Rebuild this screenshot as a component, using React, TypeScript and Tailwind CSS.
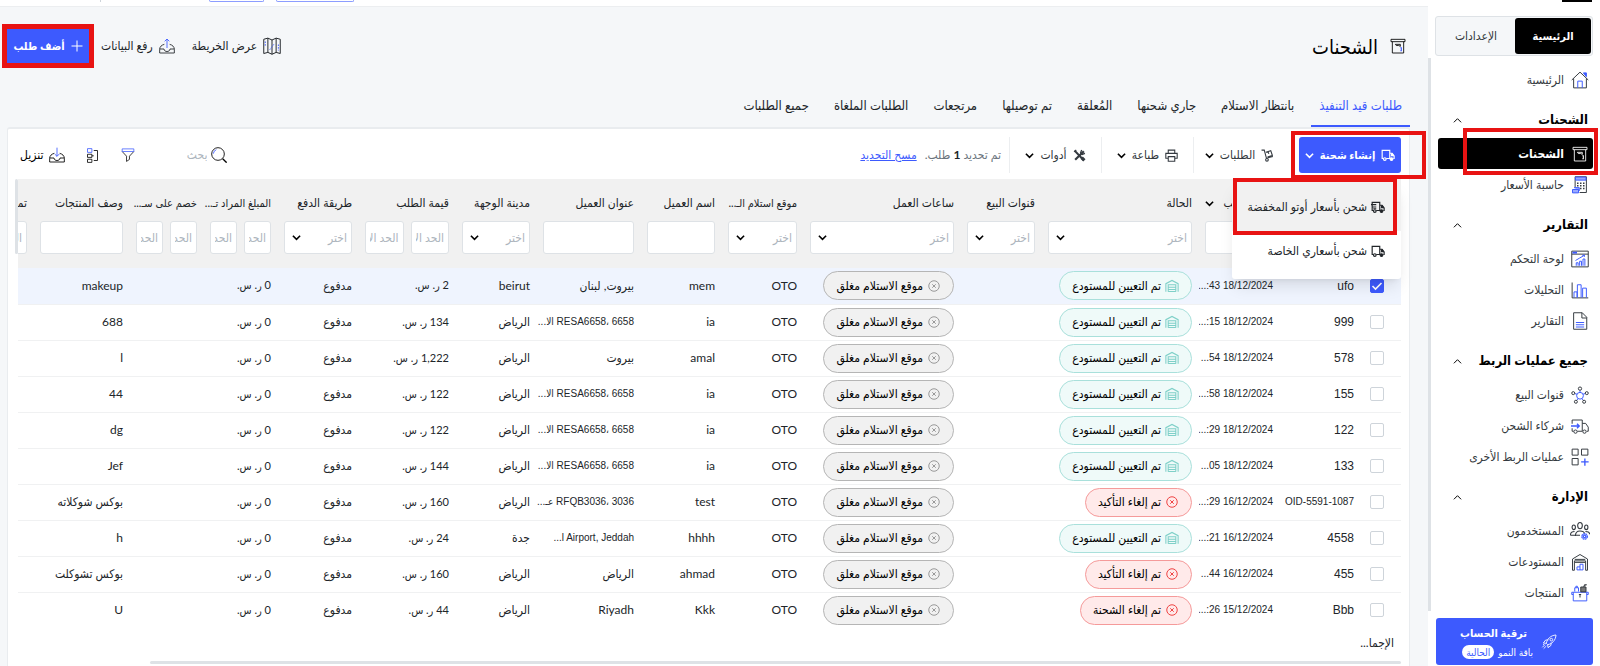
import React, { useState } from "react";

const BLUE = "#3d5afe";

type IconProps = { className?: string; children?: React.ReactNode };

const Svg: React.FC<IconProps> = ({ className = "size-[18px]", children }) => (
  <svg
    viewBox="0 0 24 24"
    fill="none"
    stroke="currentColor"
    strokeWidth="1.3"
    className={`shrink-0 ${className}`}
    aria-hidden="true"
  >
    {children}
  </svg>
);

const Chevron: React.FC<{ className?: string; thin?: boolean }> = ({ className = "", thin }) => (
  <svg
    viewBox="0 0 10 10"
    fill="none"
    stroke="currentColor"
    strokeWidth={thin ? 1.1 : 1.8}
    className={`size-[9px] shrink-0 ${className}`}
    aria-hidden="true"
  >
    <path d="M1 3l4 4 4-4" />
  </svg>
);

const HomeIcon = () => (
  <Svg>
    <path d="M1 12L12 1.500l11 10.500M3.500 10v12.500h17V10" />
    <path d="M9 22.500v-9h6v9" stroke={BLUE} />
    <path d="M16.500 2.500h4v5z" fill={BLUE} stroke={BLUE} />
  </Svg>
);

const BoxIcon: React.FC<IconProps & { accent?: string }> = ({ className, accent = BLUE }) => (
  <Svg className={className}>
    <path d="M1.500 2h21v3.500h-21zM3.500 5.500V22.500h17V5.500" />
    <path d="M8 9.500h7.500v3l-2.500-1.200H9.500z" />
    <path d="M15.500 14.500h1.500v4.500h-1.500" stroke={accent} strokeWidth="1.600" />
  </Svg>
);

const CalculatorIcon = () => (
  <Svg>
    <path d="M5.500 1h15v21h-9M5.500 1v14" />
    <path d="M6 1.500h14v4H6z" fill="#9aa9ff" stroke={BLUE} />
    <path d="M8 9.500h2M12 9.500h2M16 9.500h2M8 13h2M12 13h2M16 13h2M12 16.500h2M16 16.500h2" strokeWidth="2" />
    <path d="M2 18h8v4.500H2zM4 15.500h7V20" fill="#9aa9ff" stroke={BLUE} />
  </Svg>
);

const DashboardIcon = () => (
  <Svg>
    <path d="M1 1.500h22v21H1zM1 5.500h22" />
    <path d="M2 3.500h6" stroke={BLUE} strokeWidth="2.500" />
    <path d="M7 21v-4h2.500v4M11.500 21v-6H14v6M16 21v-9h2.500v9M6 14l5-3 7-4M15 7h3v2" stroke={BLUE} />
  </Svg>
);

const AnalyticsIcon = () => (
  <Svg>
    <path d="M1.500 2v20.500H23" />
    <path d="M4 22v-7.500h4V22M8.500 22V5h5v17M15.500 22V9.500h5V22" stroke={BLUE} />
  </Svg>
);

const DocIcon = () => (
  <Svg>
    <path d="M3.500 1H15l6 6v16h-17.500zM14.500 1v7H21" />
    <path d="M6.500 14h11M6.500 17h11M6.500 20h11" stroke={BLUE} />
  </Svg>
);

const NetworkIcon = () => (
  <Svg>
    <circle cx="12" cy="13" r="4.500" stroke={BLUE} />
    <path d="M12 8.500V6M8 11l-3-1M16 11l3-1M9.500 17L7.500 19M14.500 17l2 2" stroke={BLUE} />
    <circle cx="12" cy="3.500" r="2.200" />
    <circle cx="3" cy="9.500" r="2" />
    <circle cx="21" cy="9.500" r="2" />
    <circle cx="6.500" cy="21" r="2" />
    <circle cx="17.500" cy="21" r="2" />
  </Svg>
);

const PartnerTruckIcon = () => (
  <Svg>
    <path d="M1.500 9V4H15v15H8.500M1.500 15v4h2M15 8.500h4.500l3.500 5V19h-2" />
    <path d="M0 12h11M8 9l3 3-3 3" stroke={BLUE} strokeWidth="1.800" />
    <circle cx="6" cy="19.500" r="2.200" />
    <circle cx="18" cy="19.500" r="2.200" />
  </Svg>
);

const GridPlusIcon = () => (
  <Svg>
    <path d="M1.500 1.500h8v8h-8zM14 1.500h8.500v8H14zM1.500 14h8v8.500h-8z" />
    <path d="M18.500 14v9.500M13.500 18.500h10" stroke={BLUE} strokeWidth="1.800" />
  </Svg>
);

const UsersIcon = () => (
  <Svg className="size-5">
    <ellipse cx="12" cy="5.500" rx="2.800" ry="3.800" />
    <ellipse cx="4.500" cy="7.500" rx="2" ry="2.800" />
    <ellipse cx="19.500" cy="7.500" rx="2" ry="2.800" />
    <path d="M6.500 18c0-4 2-6 5.500-6s5 1 5.500 3M.5 17c0-3 1.500-4.500 5-4.500M23.500 16c0-2.500-1.500-3.500-5-3.500M.5 17H12" />
    <circle cx="17.500" cy="18.500" r="3.400" fill="#9aa9ff" stroke={BLUE} strokeDasharray="2 .8" />
    <circle cx="17.500" cy="18.500" r="1.400" fill="white" stroke={BLUE} />
  </Svg>
);

const WarehouseIcon = () => (
  <Svg>
    <path d="M2 23V8l10-6 10 6v15h-2.500V10.500h-15V23zM5 8.500h14M5 12.500h14" />
    <path d="M8 22.500v-4h4v-3.500h4v7.500zM12 18.500v4" stroke={BLUE} />
  </Svg>
);

const ProductsIcon = () => (
  <Svg>
    <path d="M1 11h22M3 11v11.500h18V11M1 11v3h2M23 11v3h-2M5 10V5h5v5M6.500 5V3h2v2" stroke={BLUE} />
    <path d="M13 4h7v6.500h-7zM17 4l1-3h3" fill="#777" />
    <path d="M12 14v4M10.500 14h3" />
  </Svg>
);

const RocketIcon = () => (
  <Svg className="size-4">
    <path d="M8 14c1-6 6-12 14.500-12.500C22 10 16 15 10 16zM8 14l-4.500-.5L7 9h4M10 16l.5 4.500L15 17v-4" />
    <circle cx="15.500" cy="8.500" r="2" />
    <path d="M6 16l-4 4M8 18l-4 4M5 15l-2 1" />
  </Svg>
);

const MapIcon = () => (
  <Svg>
    <path d="M1 3l5.500-1.500L12 4l5.500-2.500L23 3v19l-5.500-1.500L12 23l-5.500-2.500L1 22zM6.500 1.500v19M12 4v19M17.500 1.500v19" />
    <path d="M3 6v6M9 17l3-4 3-4M20.500 10v8" stroke={BLUE} strokeDasharray="2 1.500" />
  </Svg>
);

const TrayIcon: React.FC<{ down?: boolean }> = ({ down }) => (
  <Svg className="size-4">
    <path d="M8 9.500C4 10.500 1 13 1 17v5.500h22V17c0-4-3-6.500-7-7.500M1 16.500h6.500c0 5 9 5 9 0H23" />
    <path d={down ? "M12 1v13M8.500 10.500L12 14l3.500-3.500" : "M12 15V1.500M8.500 5L12 1.500 15.500 5"} stroke={BLUE} />
  </Svg>
);

const FunnelIcon = () => (
  <Svg className="size-[14px]">
    <path d="M2 6l7.500 8v9l5-3.500V14L22 6" />
    <path d="M2 1.500h20V6H2z" stroke={BLUE} />
  </Svg>
);

const ColumnsIcon = () => (
  <Svg className="size-[15px]">
    <path d="M4 10h7v5H4zM4 18h7v5H4zM14 4h6v16h-6M14 12.500h-3" />
    <path d="M4 1h7v6H4z" stroke={BLUE} />
  </Svg>
);

const SearchIcon = () => (
  <Svg className="size-4">
    <circle cx="10.500" cy="10.500" r="9.500" />
    <path d="M17.500 17.500l6 6" strokeWidth="2" />
    <path d="M3.500 10A7 7 0 018 4" stroke={BLUE} />
  </Svg>
);

const TruckIcon: React.FC<{ lines?: boolean; className?: string }> = ({ lines, className = "size-[14px]" }) => (
  <svg viewBox="0 0 24 24" fill="none" stroke="currentColor" strokeWidth="2" className={`shrink-0 ${className}`} aria-hidden="true">
    <path d="M4 18H2V4h13v14H9M15 9h4l3.500 4.500V18H21" />
    <path d="M17 9h3l3 5h-6z" fill="currentColor" stroke="none" />
    {lines && <path d="M0 8h9M2 12h7M4 15h5" />}
    <circle cx="6.500" cy="19" r="2.300" />
    <circle cx="18" cy="19" r="2.300" fill="currentColor" />
  </svg>
);

const CartIcon = () => (
  <Svg className="size-[13px]">
    <path d="M1 2h5l4 15 12-3M9 6l9-3 3 9-9 3M13 5l1.500 4" strokeWidth="2" />
    <circle cx="11" cy="20" r="2.500" strokeWidth="2" />
  </Svg>
);

const PrinterIcon = () => (
  <Svg className="size-[13px]">
    <path d="M6 8V2h12v6M5 17H1.500V8h21v9H19M6 14h12v8.500H6z" strokeWidth="2" />
  </Svg>
);

const ToolsIcon = () => (
  <Svg className="size-[13px]">
    <path d="M3 3l17 18M20 4L4 20" strokeWidth="4" />
    <path d="M16 2l-2 5 3 3 5-2M2 5l4-3" strokeWidth="2.400" />
    <path d="M16 16l5 5" strokeWidth="6" />
  </Svg>
);

const DepotIcon = () => (
  <Svg className="size-[14px] text-[#7fd0c8]">
    <path d="M1.500 22V8L12 2.500 22.500 8v14M5.500 22V10h13v12M5.500 14h13M5.500 18h13M5.500 21.500h13" strokeWidth="1.800" />
  </Svg>
);

const CrossCircle = () => (
  <Svg className="size-3">
    <circle cx="12" cy="12" r="10.500" strokeWidth="2" />
    <path d="M8.500 8.500l7 7M15.500 8.500l-7 7" strokeWidth="2" />
  </Svg>
);

type NavItem = { label: string; icon: React.ReactNode; active?: boolean };

const SECTIONS: { title: string; items: NavItem[] }[] = [
  {
    title: "الشحنات",
    items: [
      { label: "الشحنات", icon: <BoxIcon className="size-4" accent="currentColor" />, active: true },
      { label: "حاسبة الأسعار", icon: <CalculatorIcon /> },
    ],
  },
  {
    title: "التقارير",
    items: [
      { label: "لوحة التحكم", icon: <DashboardIcon /> },
      { label: "التحليلات", icon: <AnalyticsIcon /> },
      { label: "التقارير", icon: <DocIcon /> },
    ],
  },
  {
    title: "جميع عمليات الربط",
    items: [
      { label: "قنوات البيع", icon: <NetworkIcon /> },
      { label: "شركاء الشحن", icon: <PartnerTruckIcon /> },
      { label: "عمليات الربط الأخرى", icon: <GridPlusIcon /> },
    ],
  },
  {
    title: "الإدارة",
    items: [
      { label: "المستخدمون", icon: <UsersIcon /> },
      { label: "المستودعات", icon: <WarehouseIcon /> },
      { label: "المنتجات", icon: <ProductsIcon /> },
    ],
  },
];

const TABS = [
  "طلبات قيد التنفيذ",
  "بانتظار الاستلام",
  "جاري شحنها",
  "المُعلقة",
  "تم توصيلها",
  "مرتجعات",
  "الطلبات الملغاة",
  "جميع الطلبات",
];

type Status = "assigned" | "unconfirmed" | "cancelled";

type Row = {
  id: string;
  date: string;
  status: Status;
  customer: string;
  address: string;
  city: string;
  value: string;
  description: string;
};

const ROWS: Row[] = [
  { id: "ufo", date: "18/12/2024 43:...", status: "assigned", customer: "mem", address: "بيروت, لبنان", city: "beirut", value: "2", description: "makeup" },
  { id: "999", date: "18/12/2024 15:...", status: "assigned", customer: "ia", address: "RESA6658، 6658 الا...", city: "الرياض", value: "134", description: "688" },
  { id: "578", date: "18/12/2024 54...", status: "assigned", customer: "amal", address: "بيروت", city: "الرياض", value: "1,222", description: "l" },
  { id: "155", date: "18/12/2024 58:...", status: "assigned", customer: "ia", address: "RESA6658، 6658 الا...", city: "الرياض", value: "122", description: "44" },
  { id: "122", date: "18/12/2024 29:...", status: "assigned", customer: "ia", address: "RESA6658، 6658 الا...", city: "الرياض", value: "122", description: "dg" },
  { id: "133", date: "18/12/2024 05...", status: "assigned", customer: "ia", address: "RESA6658، 6658 الا...", city: "الرياض", value: "144", description: "Jef" },
  { id: "OID-5591-1087", date: "16/12/2024 29:...", status: "unconfirmed", customer: "test", address: "RFQB3036، 3036 عـ...", city: "الرياض", value: "160", description: "بوكس شوكلاته" },
  { id: "4558", date: "16/12/2024 21:...", status: "assigned", customer: "hhhh", address: "l Airport, Jeddah...", city: "جدة", value: "24", description: "h" },
  { id: "455", date: "16/12/2024 44...", status: "unconfirmed", customer: "ahmad", address: "الرياض", city: "الرياض", value: "160", description: "بوكس تشوكلت" },
  { id: "Bbb", date: "15/12/2024 26:...", status: "cancelled", customer: "Kkk", address: "Riyadh", city: "الرياض", value: "44", description: "U" },
];

const STATUS_LABEL: Record<Status, string> = {
  assigned: "تم التعيين للمستودع",
  unconfirmed: "تم إلغاء التأكيد",
  cancelled: "تم إلغاء الشحنة",
};

const pillBase = "inline-flex h-[29px] items-center gap-1 rounded-full border px-3 align-middle whitespace-nowrap text-black";

const StatusPill: React.FC<{ status: Status }> = ({ status }) =>
  status === "assigned" ? (
    <span className={`${pillBase} border-[#a9e0db] bg-[#effaf9]`}>
      <DepotIcon />
      {STATUS_LABEL[status]}
    </span>
  ) : (
    <span className={`${pillBase} border-[#f59a9a] bg-[#ffeaea]`}>
      <span className="flex px-px text-[#ef4444]">
        <CrossCircle />
      </span>
      {STATUS_LABEL[status]}
    </span>
  );

const fieldBase = "h-[33px] w-full min-w-0 rounded-[3px] border border-[#dee2e6] bg-white px-1 text-xs text-[#adb5bd] placeholder-[#adb5bd] outline-none";

const TextFilter: React.FC<{ label: string; placeholder?: string }> = ({ label, placeholder }) => (
  <input type="text" aria-label={label} placeholder={placeholder} className={fieldBase} />
);

const SelectFilter: React.FC<{ label: string }> = ({ label }) => (
  <div className="relative">
    <select aria-label={label} className={`${fieldBase} appearance-none`}>
      <option>اختر</option>
    </select>
    <Chevron className="pointer-events-none absolute top-3 left-2 text-black" />
  </div>
);

const RangeFilter: React.FC<{ label: string; from?: string; to?: string }> = ({ label, from = "الحد", to = "الحد" }) => (
  <div className="flex gap-[7px]">
    <TextFilter label={`${label} من`} placeholder={from} />
    <TextFilter label={`${label} إلى`} placeholder={to} />
  </div>
);

const COLUMNS: { title: string; width: string; filter: React.ReactNode; small?: boolean }[] = [
  { title: "رقم الطلب", width: "w-[81px]", filter: <TextFilter label="رقم الطلب" /> },
  { title: "تاريخ الطلب", width: "w-[81px]", filter: <TextFilter label="تاريخ الطلب" />, small: true },
  { title: "الحالة", width: "w-[157px]", filter: <SelectFilter label="الحالة" /> },
  { title: "قنوات البيع", width: "w-[81px]", filter: <SelectFilter label="قنوات البيع" /> },
  { title: "ساعات العمل", width: "w-[157px]", filter: <SelectFilter label="ساعات العمل" /> },
  { title: "موقع استلام الـ...", width: "w-[82px]", filter: <SelectFilter label="موقع استلام" />, small: true },
  { title: "اسم العميل", width: "w-[81px]", filter: <TextFilter label="اسم العميل" /> },
  { title: "عنوان العميل", width: "w-[104px]", filter: <TextFilter label="عنوان العميل" /> },
  { title: "مدينة الوجهة", width: "w-[81px]", filter: <SelectFilter label="مدينة الوجهة" /> },
  { title: "قيمة الطلب", width: "w-[97px]", filter: <RangeFilter label="قيمة الطلب" from="الحد الأدنى" to="الحد الأقصى" /> },
  { title: "طريقة الدفع", width: "w-[81px]", filter: <SelectFilter label="طريقة الدفع" /> },
  { title: "المبلغ المراد تـ...", width: "w-[74px]", filter: <RangeFilter label="المبلغ المراد تحصيله" />, small: true },
  { title: "خصم على سـ...", width: "w-[74px]", filter: <RangeFilter label="خصم" />, small: true },
  { title: "وصف المنتجات", width: "w-[96px]", filter: <TextFilter label="وصف المنتجات" /> },
  { title: "تمت الطباعة", width: "w-[81px]", filter: <TextFilter label="تمت الطباعة" placeholder="الحد" /> },
];

const cell = "overflow-hidden pr-[7px] whitespace-nowrap";
const codeCell = `${cell} font-['Liberation_Sans','DejaVu_Sans_Condensed',sans-serif] text-[10px]`;

const Sidebar = () => (
  <aside className="flex w-[172px] shrink-0 flex-col bg-white">
    <div className="mr-2 h-0.5 w-[30px] shrink-0 self-start bg-black" />
    <div className="mt-3.5 mr-[7px] ml-[7px] flex h-10 shrink-0 rounded-[3px] border border-[#dee2e6] bg-[#f5f7f9] p-px">
      <button className="w-[76px] rounded-[3px] bg-black text-[11px] font-bold text-white">الرئيسية</button>
      <button className="flex-1 text-xs text-[#343a40]">الإعدادات</button>
    </div>
    <div className="flex min-h-0 flex-1">
      <nav className="min-w-0 flex-1 pt-2 text-xs text-[#343a40]">
        <a href="#home" className="mr-2 flex h-[31px] items-center gap-1.5 pr-0.5">
          <span className="flex w-5 justify-center">
            <HomeIcon />
          </span>
          الرئيسية
        </a>
        {SECTIONS.map((section) => (
          <div key={section.title} className="mt-[7px]">
            <button className="flex h-9 w-full items-center justify-between pr-3 pl-[22px] text-[13px] font-bold text-black">
              {section.title}
              <Chevron thin className="rotate-180" />
            </button>
            {section.items.map((item) => (
              <a
                key={item.label}
                href="#item"
                className={
                  item.active
                    ? "relative mr-[7px] ml-[7px] flex h-[31px] items-center gap-1.5 rounded-[3px] bg-black pr-[3px] font-bold text-white"
                    : "mr-2 flex h-[31px] items-center gap-1.5 pr-0.5"
                }
              >
                <span className="flex w-5 shrink-0 justify-center">{item.icon}</span>
                {item.label}
                {item.active && <span className="absolute -top-2.5 -right-[5px] -bottom-1.5 left-[25px] border-4 border-[#e81313]" />}
              </a>
            ))}
          </div>
        ))}
      </nav>
      <div className="mt-0.5 mb-[7px] w-[3px] shrink-0 bg-[#dee2e6]" />
    </div>
    <a href="#upgrade" className="mr-[7px] mb-px ml-2 flex h-[47px] shrink-0 items-center gap-2 rounded-[3px] bg-[#3d5afe] pr-9 text-white">
      <RocketIcon />
      <span className="flex flex-col gap-1 whitespace-nowrap">
        <span className="pr-1.5 text-[11px] leading-4 font-bold">ترقية الحساب</span>
        <span className="flex items-center gap-1 text-[10px] leading-[14px]">
          باقة النمو
          <span className="rounded-full bg-white px-1 text-[#3d5afe]">الحالية</span>
        </span>
      </span>
    </a>
  </aside>
);

const PageHeader = () => (
  <header className="flex h-[78px] shrink-0 items-center justify-between pr-1">
    <h1 className="flex items-center gap-3 text-xl text-black">
      <BoxIcon className="size-4" />
      الشحنات
    </h1>
    <div className="flex items-center text-xs text-[#212529]">
      <button className="flex items-center gap-1.5">
        <MapIcon />
        عرض الخريطة
      </button>
      <button className="mr-[17px] flex items-center gap-1.5">
        <TrayIcon />
        رفع البيانات
      </button>
      <div className="relative mr-3">
        <button className="flex h-[34px] w-[82px] items-center justify-center gap-1.5 bg-[#3d5afe] text-[11px] font-bold text-white">
          <Svg className="size-3">
            <path d="M12 1v22M1 12h22" strokeWidth="2" />
          </Svg>
          أضف طلب
        </button>
        <span className="pointer-events-none absolute -inset-[5px] border-[5px] border-[#e81313]" />
      </div>
    </div>
  </header>
);

const toolButton = "flex w-full items-center justify-center gap-1.5 text-xs text-[#343a40]";
const toolGroup = "flex h-9 w-[92px] items-center border-l border-[#eceef0]";

const Toolbar = () => (
  <div className="flex h-[50px] shrink-0 items-center pt-0.5 pr-2 pl-3">
    <div className="relative">
      <button className="flex h-9 w-[102px] items-center justify-center gap-1.5 rounded-[3px] bg-[#3d5afe] text-[11px] font-bold text-white">
        <TruckIcon />
        إنشاء شحنة
        <Chevron />
      </button>
      <span className="pointer-events-none absolute -top-1.5 -right-[25px] -bottom-1.5 -left-2 z-10 border-4 border-[#e81313]" />

      {/* Shipping menu */}
      <ul role="menu" className="absolute top-[45px] right-0 z-20 h-[97px] w-[169px] rounded-b-[3px] bg-white text-xs whitespace-nowrap text-[#212529] shadow-lg">
        <li role="none" className="relative h-[49px] bg-[#f1f1f1] pr-4">
          <button role="menuitem" className="flex h-[49px] items-center gap-1">
            <TruckIcon lines />
            شحن بأسعار أوتو المخفضة
          </button>
          <span className="pointer-events-none absolute -top-1 right-1 -bottom-1 left-px border-4 border-[#e81313]" />
        </li>
        <li role="none" className="pr-4">
          <button role="menuitem" className="flex h-10 items-center gap-1">
            <TruckIcon />
            شحن بأسعاري الخاصة
          </button>
        </li>
      </ul>
    </div>
    <div className={`mr-[14px] ${toolGroup}`}>
      <button className={toolButton}>
        <CartIcon />
        الطلبات
        <Chevron className="text-black" />
      </button>
    </div>
    <div className={toolGroup}>
      <button className={toolButton}>
        <PrinterIcon />
        طباعة
        <Chevron className="text-black" />
      </button>
    </div>
    <div className={toolGroup}>
      <button className={toolButton}>
        <ToolsIcon />
        أدوات
        <Chevron className="text-black" />
      </button>
    </div>
    <p className="mr-2 text-xs text-[#6c757d]">
      تم تحديد <b className="text-[#212529]">1</b> طلب.
    </p>
    <a href="#clear" className="mr-2 text-xs text-[#3d5afe] underline">
      مسح التحديد
    </a>
    <label className="mr-auto flex items-center gap-1">
      <SearchIcon />
      <input type="search" aria-label="بحث" placeholder="بحث" className="w-16 text-xs placeholder-[#adb5bd] outline-none" />
    </label>
    <button aria-label="تصفية" className="mr-2">
      <FunnelIcon />
    </button>
    <button aria-label="الأعمدة" className="mr-[21px]">
      <ColumnsIcon />
    </button>
    <button className="mr-5 flex items-center gap-1.5 text-xs text-black">
      <TrayIcon down />
      تنزيل
    </button>
  </div>
);

const OrdersTable = () => {
  const [selected, setSelected] = useState<string[]>(["ufo"]);

  const toggle = (id: string) =>
    setSelected((prev) => (prev.includes(id) ? prev.filter((x) => x !== id) : [...prev, id]));

  return (
    <table className="w-[1448px] table-fixed border-collapse text-right text-xs text-[#212529]">
      <colgroup>
        <col className="w-10" />
        {COLUMNS.map((col) => (
          <col key={col.title} className={col.width} />
        ))}
      </colgroup>
      <thead className="bg-[#f1f1f1]">
        <tr>
          <th className="h-[89px]" />
          {COLUMNS.map((col, i) => (
            <th key={col.title} scope="col" className="h-[89px] overflow-hidden pt-3.5 pr-[7px] pl-[6px] align-top font-normal whitespace-nowrap">
              <div className="mb-2 flex h-5 items-center justify-between">
                <span className={col.small ? "text-[11px]" : ""}>{col.title}</span>
                {i === 1 && <Chevron className="text-black" />}
              </div>
              {col.filter}
            </th>
          ))}
        </tr>
      </thead>
      <tbody>
        {ROWS.map((row) => {
          const checked = selected.includes(row.id);
          return (
            <tr key={row.id} className={`h-9 border-b border-[#f0f1f2] ${checked ? "bg-[#eff4fe]" : "bg-white"}`}>
              <td className="pr-[17px]">
                <span className="relative block size-[14px]">
                  <input
                    type="checkbox"
                    aria-label={`تحديد الطلب ${row.id}`}
                    checked={checked}
                    onChange={() => toggle(row.id)}
                    className="block size-[14px] appearance-none rounded-[2px] border border-[#ced4da] bg-white checked:border-[#3d5afe] checked:bg-[#3d5afe]"
                  />
                  {checked && (
                    <svg viewBox="0 0 14 14" fill="none" stroke="white" strokeWidth="1.6" className="pointer-events-none absolute inset-0" aria-hidden="true">
                      <path d="M2.500 7l3 3 6-6" />
                    </svg>
                  )}
                </span>
              </td>
              <td className={codeCell.replace("text-[10px]", row.id.length > 5 ? "text-[10px]" : "text-xs")}>{row.id}</td>
              <td className={codeCell}>{row.date}</td>
              <td className={cell}>
                <StatusPill status={row.status} />
              </td>
              <td />
              <td className={cell}>
                <span className={`${pillBase} border-[#b5b5b5] bg-[#f1f1f1]`}>
                  <span className="flex px-px text-[#999]">
                    <CrossCircle />
                  </span>
                  موقع الاستلام مغلق
                </span>
              </td>
              <td className={cell}>OTO</td>
              <td className={cell}>{row.customer}</td>
              <td className={row.address.endsWith("...") ? codeCell : cell}>{row.address}</td>
              <td className={cell}>{row.city}</td>
              <td className={`${cell} text-[11px]`}>{row.value} ر. س.</td>
              <td className={cell}>مدفوع</td>
              <td className={`${cell} text-[11px]`}>0 ر. س.</td>
              <td />
              <td className={cell}>{row.description}</td>
              <td />
            </tr>
          );
        })}
      </tbody>
    </table>
  );
};

export default function App() {
  const [tab, setTab] = useState(TABS[0]);

  return (
    <div dir="rtl" className="flex h-screen overflow-hidden bg-[#f5f7f9] font-['Lato','DejaVu_Sans_Condensed','DejaVu_Sans',sans-serif]">
      <Sidebar />
      <div className="flex min-w-0 flex-1 flex-col">
        {/* Lower edge of the top bar */}
        <div className="flex h-[7px] shrink-0 items-start justify-end gap-3 border-b border-[#eceef0] bg-white pl-[100px]">
          <div className="h-0.5 w-[78px] rounded-b-[3px] border border-t-0 border-[#8c9dff]" />
          <div className="ml-24 h-0.5 w-[55px] rounded-b-[3px] border border-t-0 border-[#8c9dff]" />
          <div className="h-0.5 w-px bg-[#ced4da]" />
        </div>
        <main className="flex min-h-0 flex-1 flex-col pr-[18px] pl-[7px]">
          <PageHeader />
          <div role="tablist" className="flex h-[42px] shrink-0 gap-[9px] text-[13px] text-[#212529]">
            {TABS.map((name) => (
              <button
                key={name}
                role="tab"
                aria-selected={name === tab}
                onClick={() => setTab(name)}
                className={`border-b-2 px-2 pt-0.5 ${name === tab ? "border-[#3d5afe] text-[#3d5afe]" : "border-transparent"}`}
              >
                {name}
              </button>
            ))}
          </div>
          <section className="flex min-h-0 flex-1 flex-col rounded-t-[3px] border-x border-t-2 border-[#e9ecef] bg-white">
            <Toolbar />
            <div className="flex min-h-0 flex-1 pr-2 pl-[7px]">
              <div className="min-w-0 flex-1 overflow-hidden">
                <OrdersTable />
              </div>
              <div className="h-[75px] w-[3px] shrink-0 rounded-full bg-[#dee2e6]" />
            </div>
            <div className="flex h-9 shrink-0 items-center pr-[15px] text-xs text-[#212529]">الإجما...</div>
            <div className="mr-2 mb-0.5 ml-[142px] h-[3px] shrink-0 rounded-full bg-[#dee2e6]" />
          </section>
        </main>
      </div>
    </div>
  );
}
